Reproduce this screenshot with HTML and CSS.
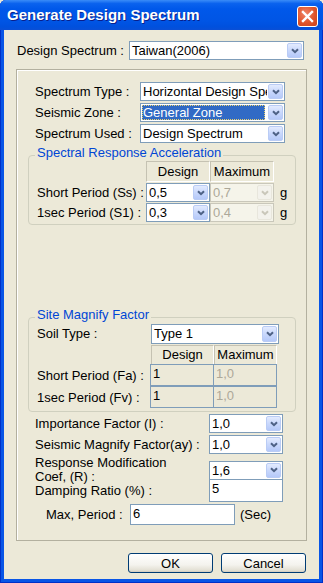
FILE: index.html
```html
<!DOCTYPE html>
<html lang="en">
<head>
    <meta charset="UTF-8">
    <title>Generate Design Spectrum</title>
    <link rel="stylesheet" href="styles.css">
</head>
<body>
    <div class="window">
        <!--title bar-->
        <div class="titlebar">
            <span class="title">Generate Design Spectrum</span>
            <span class="close">
                <svg width="21" height="21" viewBox="0 0 21 21"><path d="M6 6 L15 15 M15 6 L6 15" stroke="#fff" stroke-width="2.4" stroke-linecap="square"/></svg>
            </span>
        </div>

        <div class="client">
            <div class="top-row">
                <span class="lbl">Design Spectrum :</span>
                <div class="combo">
                    <span class="val">Taiwan(2006)</span>
                    <span class="btn"><svg width="8" height="6" viewBox="0 0 8 6"><path d="M1 1.2 L4 4.2 L7 1.2" fill="none" stroke="#4D6185" stroke-width="2"/></svg></span>
                </div>
            </div>

            <div class="outer">
                <div class="row-a">
                    <span class="lbl">Spectrum Type :</span>
                    <div class="combo">
                        <span class="val">Horizontal Design Spectrum</span>
                        <span class="btn"><svg width="8" height="6" viewBox="0 0 8 6"><path d="M1 1.2 L4 4.2 L7 1.2" fill="none" stroke="#4D6185" stroke-width="2"/></svg></span>
                    </div>
                </div>
                <div class="row-a">
                    <span class="lbl">Seismic Zone :</span>
                    <div class="combo">
                        <span class="val focus">General Zone</span>
                        <span class="btn"><svg width="8" height="6" viewBox="0 0 8 6"><path d="M1 1.2 L4 4.2 L7 1.2" fill="none" stroke="#4D6185" stroke-width="2"/></svg></span>
                    </div>
                </div>
                <div class="row-a">
                    <span class="lbl">Spectrum Used :</span>
                    <div class="combo">
                        <span class="val">Design Spectrum</span>
                        <span class="btn"><svg width="8" height="6" viewBox="0 0 8 6"><path d="M1 1.2 L4 4.2 L7 1.2" fill="none" stroke="#4D6185" stroke-width="2"/></svg></span>
                    </div>
                </div>

                <!--spectral response acceleration group-->
                <fieldset class="grp grp-sra">
                    <legend>Spectral Response Acceleration</legend>
                    <div class="sra-grid">
                        <span></span>
                        <span class="head">Design</span>
                        <span class="head">Maximum</span>
                        <span></span>

                        <span class="lbl">Short Period (Ss) :</span>
                        <div class="combo">
                            <span class="val">0,5</span>
                            <span class="btn"><svg width="8" height="6" viewBox="0 0 8 6"><path d="M1 1.2 L4 4.2 L7 1.2" fill="none" stroke="#4D6185" stroke-width="2"/></svg></span>
                        </div>
                        <div class="combo off">
                            <span class="val">0,7</span>
                            <span class="btn"><svg width="8" height="6" viewBox="0 0 8 6"><path d="M1 1.2 L4 4.2 L7 1.2" fill="none" stroke="#C9C7BA" stroke-width="2"/></svg></span>
                        </div>
                        <span class="lbl">g</span>

                        <span class="lbl">1sec Period (S1) :</span>
                        <div class="combo">
                            <span class="val">0,3</span>
                            <span class="btn"><svg width="8" height="6" viewBox="0 0 8 6"><path d="M1 1.2 L4 4.2 L7 1.2" fill="none" stroke="#4D6185" stroke-width="2"/></svg></span>
                        </div>
                        <div class="combo off">
                            <span class="val">0,4</span>
                            <span class="btn"><svg width="8" height="6" viewBox="0 0 8 6"><path d="M1 1.2 L4 4.2 L7 1.2" fill="none" stroke="#C9C7BA" stroke-width="2"/></svg></span>
                        </div>
                        <span class="lbl">g</span>
                    </div>
                </fieldset>

                <!--site magnify factor group-->
                <fieldset class="grp grp-site">
                    <legend>Site Magnify Factor</legend>
                    <div class="site-grid">
                        <span class="lbl soil-lbl">Soil Type :</span>
                        <div class="combo soil">
                            <span class="val">Type 1</span>
                            <span class="btn"><svg width="8" height="6" viewBox="0 0 8 6"><path d="M1 1.2 L4 4.2 L7 1.2" fill="none" stroke="#4D6185" stroke-width="2"/></svg></span>
                        </div>

                        <span></span>
                        <span class="head">Design</span>
                        <span class="head">Maximum</span>

                        <span class="lbl">Short Period (Fa) :</span>
                        <span class="cell">1</span>
                        <span class="cell dim">1,0</span>

                        <span class="lbl">1sec Period (Fv) :</span>
                        <span class="cell">1</span>
                        <span class="cell dim">1,0</span>
                    </div>
                </fieldset>

                <div class="row-b">
                    <span class="lbl">Importance Factor (I) :</span>
                    <div class="combo">
                        <span class="val">1,0</span>
                        <span class="btn"><svg width="8" height="6" viewBox="0 0 8 6"><path d="M1 1.2 L4 4.2 L7 1.2" fill="none" stroke="#4D6185" stroke-width="2"/></svg></span>
                    </div>
                </div>
                <div class="row-b">
                    <span class="lbl">Seismic Magnify Factor(ay) :</span>
                    <div class="combo">
                        <span class="val">1,0</span>
                        <span class="btn"><svg width="8" height="6" viewBox="0 0 8 6"><path d="M1 1.2 L4 4.2 L7 1.2" fill="none" stroke="#4D6185" stroke-width="2"/></svg></span>
                    </div>
                </div>
                <div class="row-b">
                    <span class="lbl two">Response Modification<br>Coef, (R) :</span>
                    <div class="combo">
                        <span class="val">1,6</span>
                        <span class="btn"><svg width="8" height="6" viewBox="0 0 8 6"><path d="M1 1.2 L4 4.2 L7 1.2" fill="none" stroke="#4D6185" stroke-width="2"/></svg></span>
                    </div>
                </div>
                <div class="row-b damp">
                    <span class="lbl">Damping Ratio (%) :</span>
                    <span class="field">5</span>
                </div>
                <div class="row-c">
                    <span class="lbl">Max, Period :</span>
                    <span class="field">6</span>
                    <span class="lbl">(Sec)</span>
                </div>
            </div>

            <!--dialog buttons-->
            <div class="buttons">
                <span class="button">OK</span>
                <span class="button">Cancel</span>
            </div>
        </div>
    </div>
</body>
</html>
```

FILE: styles.css
```css
/* reset page and set the dialog font */
body {
    margin: 0;
    background: #ECE9D8;
    font-family: "Liberation Sans", Arial, sans-serif;
    font-size: 13px;
    color: #000;
}

* {
    box-sizing: border-box;
}

/* window frame */
.window {
    width: 323px;
    height: 583px;
    background: #0855E6;
    box-shadow: inset 1px 0 #0030C8, inset -1px 0 #0030C8, inset 0 -1px #0030C8;
    border-radius: 6px 6px 0 0;
    padding: 0 4px 4px 4px;
    display: flex;
    flex-direction: column;
}

/* blue title bar */
.titlebar {
    height: 30px;
    margin: 0 -4px;
    padding: 0 5px 0 7px;
    display: flex;
    align-items: center;
    justify-content: space-between;
    border-radius: 6px 6px 0 0;
    background: linear-gradient(#3A8CF8 0%, #0A62EE 12%, #0058EA 30%, #0055E5 70%, #0050DD 90%, #0A4FD6 100%);
}

.title {
    color: #fff;
    font-weight: bold;
    font-size: 15px;
    text-shadow: 1px 1px #0A1E8A;
    padding-bottom: 1px;
}

.close {
    width: 21px;
    height: 21px;
    border: 1px solid #fff;
    border-radius: 3px;
    background: radial-gradient(circle at 40% 35%, #F0866A 0%, #E0542A 55%, #C8411C 100%);
    display: flex;
    align-items: center;
    justify-content: center;
    margin-top: 2px;
}

.close svg {
    margin: -1px;
}

/* grey dialog area */
.client {
    flex: 1;
    background: #ECE9D8;
}

.lbl {
    white-space: nowrap;
}

.top-row {
    display: grid;
    grid-template-columns: 112px 175px;
    align-items: center;
    height: 19px;
    margin-top: 11px;
    padding-left: 13px;
}

/* combo box */
.combo {
    display: flex;
    height: 19px;
    border: 1px solid #7F9DB9;
    background: #fff;
    overflow: hidden;
}

.combo .val {
    flex: 1;
    padding-left: 2px;
    line-height: 17px;
    white-space: nowrap;
    overflow: hidden;
}

.combo .val.focus {
    margin: 1px 2px 1px 1px;
    padding-left: 1px;
    line-height: 15px;
    background: #316AC5;
    color: #fff;
    outline: 1px dotted #E8D070;
    outline-offset: -1px;
}

.combo .btn {
    width: 15px;
    margin: 1px;
    border: 1px solid #BACCF5;
    border-radius: 2px;
    background: linear-gradient(#E3EBFE, #C9D8FC 50%, #B5C9F9);
    display: flex;
    align-items: center;
    justify-content: center;
}

.combo.off {
    border-color: #C9C7BA;
    background: #F5F4EA;
}

.combo.off .val {
    color: #ACA899;
}

.combo.off .btn {
    border-color: #E8E6DC;
    background: #F3F2EC;
}

/* main etched frame */
.outer {
    margin: 9px 0 0 12px;
    width: 291px;
    height: 472px;
    border: 1px solid #B3B09F;
    box-shadow: inset 1px 1px #fff;
    padding-top: 12px;
}

.row-a {
    display: grid;
    grid-template-columns: 105px 145px;
    align-items: center;
    height: 19px;
    margin-bottom: 2px;
    padding-left: 18px;
}

/* rounded group boxes */
.grp {
    margin: 0 0 0 11px;
    width: 268px;
    border: 1px solid #D0D0BF;
    border-radius: 4px;
    padding: 0 0 0 6px;
    min-width: 0;
}

.grp legend {
    color: #0046D5;
    line-height: 12px;
    padding: 0 2px 4px 2px;
}

.grp-sra {
    margin-top: 4px;
    padding-bottom: 2px;
}

.sra-grid {
    margin: -2px 0 0 2px;
    display: grid;
    grid-template-columns: 109px 64px 64px auto;
    grid-template-rows: 21px 19px 19px;
    row-gap: 1px;
    column-gap: 0;
    align-items: center;
}

.sra-grid .combo + .lbl {
    padding-left: 6px;
}

.sra-grid .head {
    height: 21px;
    margin-bottom: 1px;
}

.head {
    display: flex;
    align-items: center;
    justify-content: center;
    height: 100%;
    border-top: 1px solid #C5C2B2;
    border-left: 1px solid #C5C2B2;
    border-right: 1px solid #fff;
    border-bottom: 1px solid #fff;
}

.grp-site {
    margin-top: 84px;
    padding-bottom: 3px;
}

.site-grid {
    margin: -1px 0 0 2px;
    display: grid;
    grid-template-columns: 114px 63px 63px;
    grid-template-rows: 20px 20px 22px 22px;
    align-items: center;
}

.site-grid .combo.soil {
    grid-column: 2 / 4;
    width: 128px;
    height: 20px;
    margin-bottom: 1px;
}

.soil-lbl {
    align-self: start;
    padding-top: 2px;
}

.site-grid .head {
    margin-top: 1px;
}

/* read-only value boxes */
.cell {
    height: 100%;
    border: 1px solid #7F9DB9;
    margin-left: -1px;
    padding: 1px 0 0 2px;
    line-height: 16px;
}

.cell.dim {
    color: #ACA899;
}

.row-b {
    display: grid;
    grid-template-columns: 174px 74px;
    align-items: center;
    height: 19px;
    margin-top: 2px;
    padding-left: 18px;
}

.lbl.two {
    line-height: 14px;
}

.field {
    height: 100%;
    border: 1px solid #7F9DB9;
    background: #fff;
    padding: 1px 0 0 2px;
    line-height: 16px;
}

.row-b.damp {
    height: 23px;
    margin-top: 4px;
}

.row-c {
    display: grid;
    grid-template-columns: 84px 105px auto;
    column-gap: 0;
    align-items: center;
    height: 21px;
    margin-top: 2px;
    padding-left: 29px;
}

.row-c .field + .lbl {
    padding-left: 5px;
}

/* OK / Cancel */
.buttons {
    display: flex;
    gap: 8px;
    margin: 12px 0 0 124px;
}

.button {
    width: 85px;
    height: 20px;
    border: 1px solid #003C74;
    border-radius: 3px;
    background: linear-gradient(#FFFFFF, #F4F3EE 60%, #E3E0D4 90%, #D6D0C5);
    box-shadow: inset 0 -1px #D6D0C5;
    display: flex;
    align-items: center;
    justify-content: center;
}
```
